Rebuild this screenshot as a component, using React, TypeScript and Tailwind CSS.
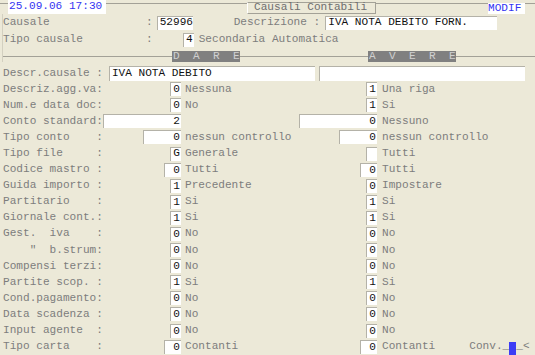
import React from "react";

type Row = {
  label: string;
  lv: string;
  lw: string;
  ld: string;
  rv: string;
  rw: string;
  rd: string;
};

const one = "w-[11px]";

const rows: Row[] = [
  { label: "Descriz.agg.va:", lv: "0", lw: one, ld: "Nessuna", rv: "1", rw: one, rd: "Una riga" },
  { label: "Num.e data doc:", lv: "0", lw: one, ld: "No", rv: "1", rw: one, rd: "Si" },
  { label: "Conto standard:", lv: "2", lw: "w-[78px]", ld: "", rv: "0", rw: "w-[78px]", rd: "Nessuno" },
  { label: "Tipo conto    :", lv: "0", lw: "w-[38px]", ld: "nessun controllo", rv: "0", rw: "w-[38px]", rd: "nessun controllo" },
  { label: "Tipo file     :", lv: "G", lw: one, ld: "Generale", rv: "", rw: one, rd: "Tutti" },
  { label: "Codice mastro :", lv: "0", lw: "w-[17px]", ld: "Tutti", rv: "0", rw: "w-[17px]", rd: "Tutti" },
  { label: "Guida importo :", lv: "1", lw: one, ld: "Precedente", rv: "0", rw: one, rd: "Impostare" },
  { label: "Partitario    :", lv: "1", lw: one, ld: "Si", rv: "1", rw: one, rd: "Si" },
  { label: "Giornale cont.:", lv: "1", lw: one, ld: "Si", rv: "1", rw: one, rd: "Si" },
  { label: "Gest.  iva    :", lv: "0", lw: one, ld: "No", rv: "0", rw: one, rd: "No" },
  { label: '    "  b.strum:', lv: "0", lw: one, ld: "No", rv: "0", rw: one, rd: "No" },
  { label: "Compensi terzi:", lv: "0", lw: one, ld: "No", rv: "0", rw: one, rd: "No" },
  { label: "Partite scop. :", lv: "1", lw: one, ld: "Si", rv: "1", rw: one, rd: "Si" },
  { label: "Cond.pagamento:", lv: "0", lw: one, ld: "No", rv: "0", rw: one, rd: "No" },
  { label: "Data scadenza :", lv: "0", lw: one, ld: "No", rv: "0", rw: one, rd: "No" },
  { label: "Input agente  :", lv: "0", lw: one, ld: "No", rv: "0", rw: one, rd: "No" },
  { label: "Tipo carta    :", lv: "0", lw: "w-[17px]", ld: "Contanti", rv: "0", rw: "w-[17px]", rd: "Contanti" },
];

// campo bianco incassato, valore allineato a destra
function Box({ v, w }: { v: string; w: string }) {
  return (
    <div
      className={`${w} h-[14px] shrink-0 bg-white border-l border-t border-[#b4b2a8] flex items-center justify-end pr-[1px] text-[#111]`}
    >
      {v}
    </div>
  );
}

function Line({ w }: { w: string }) {
  return <div className={`${w} h-0 border-t border-[#a3a197]`} />;
}

export default function App() {
  return (
    <div className="w-[535px] h-[355px] overflow-hidden bg-[#ece9d8] font-['Liberation_Mono',monospace] text-[11.1px] leading-none text-[#7d7d7d]">
      {/* barra in alto */}
      <div className="flex items-start h-[14px]">
        <div className="w-[8px] mt-[3px] h-0 border-t border-[#a3a197]" />
        <div className="w-[98px] h-[14px] bg-white text-[#3434f2] flex items-center pl-[1px] whitespace-pre">
          25.09.06 17:30
        </div>
        <div className="w-[141px] mt-[3px] h-0 border-t border-[#a3a197]" />
        <div className="w-[129px] h-[12px] mt-[2px] border border-[#a3a197] border-l-white border-t-[#a3a197] flex items-center pl-[6px] text-[#6f6f6f]">
          Causali Contabili
        </div>
        <div className="w-[112px] mt-[3px] h-0 border-t border-[#a3a197]" />
        <div className="w-[37px] h-[11px] mt-[3px] bg-white text-[#3434f2] flex items-center">MODIF</div>
        <div className="flex-1 mt-[3px] h-0 border-t border-[#a3a197]" />
      </div>

      {/* testata */}
      <div className="ml-[2px] border-l border-[#d3d0c0]">
        <div className="flex items-center h-[17px]">
          <span className="w-[143px]">Causale</span>
          <span>:</span>
          <div className="ml-[4px] w-[36px] h-[14px] bg-white border-l border-t border-[#b4b2a8] flex items-center pl-[2px] text-[#111]">
            52996
          </div>
          <span className="ml-[41px] whitespace-pre">Descrizione :</span>
          <div className="ml-[5px] w-[172px] h-[14px] bg-white border-l border-t border-[#b4b2a8] flex items-center pl-[2px] text-[#111] whitespace-pre">
            IVA NOTA DEBITO FORN.
          </div>
        </div>
        <div className="flex items-center h-[17px]">
          <span className="w-[143px]">Tipo causale</span>
          <span>:</span>
          <div className="ml-[30px]">
            <Box v="4" w={one} />
          </div>
          <span className="ml-[5px]">Secondaria Automatica</span>
        </div>
        <div className="flex items-center h-[11px] mt-[3px]">
          <Line w="w-[169px]" />
          <div className="w-[68px] h-[11px] bg-[#808080] text-[#d0d0d0] flex items-center pl-[1px] whitespace-pre">
            D  A  R  E
          </div>
          <Line w="w-[128px]" />
          <div className="w-[88px] h-[11px] bg-[#808080] text-[#d0d0d0] flex items-center pl-[1px] whitespace-pre">
            A  V  E  R  E
          </div>
          <Line w="flex-1" />
        </div>
      </div>

      {/* righe */}
      <div className="mt-[3px] flex flex-col">
        <div className="flex items-center h-[16.1px]">
          <span className="pl-[3px] whitespace-pre">Descr.causale :</span>
          <div className="ml-[6px] w-[206px] h-[15px] bg-white border-l border-t border-[#b4b2a8] flex items-center pl-[2px] text-[#111]">
            IVA NOTA DEBITO
          </div>
          <div className="ml-[4px] w-[206px] h-[15px] bg-white border-l border-t border-[#b4b2a8]" />
        </div>
        {rows.map((r, i) => (
          <div key={i} className="flex items-center h-[16.1px]">
            <div className="w-[181px] pl-[3px] flex items-center justify-between">
              <span className="whitespace-pre">{r.label}</span>
              <Box v={r.lv} w={r.lw} />
            </div>
            <div className="ml-[4px] w-[192px] flex items-center justify-between">
              <span className="whitespace-pre">{r.ld}</span>
              <Box v={r.rv} w={r.rw} />
            </div>
            <span className="ml-[5px] whitespace-pre">{r.rd}</span>
            {i === rows.length - 1 && (
              <div className="ml-[34px] flex items-center whitespace-pre">
                <span>Conv._</span>
                <div className="w-[7px] h-[14px] mt-[4px] bg-[#3d3df5]" />
                <span>_&lt;</span>
              </div>
            )}
          </div>
        ))}
      </div>
    </div>
  );
}
